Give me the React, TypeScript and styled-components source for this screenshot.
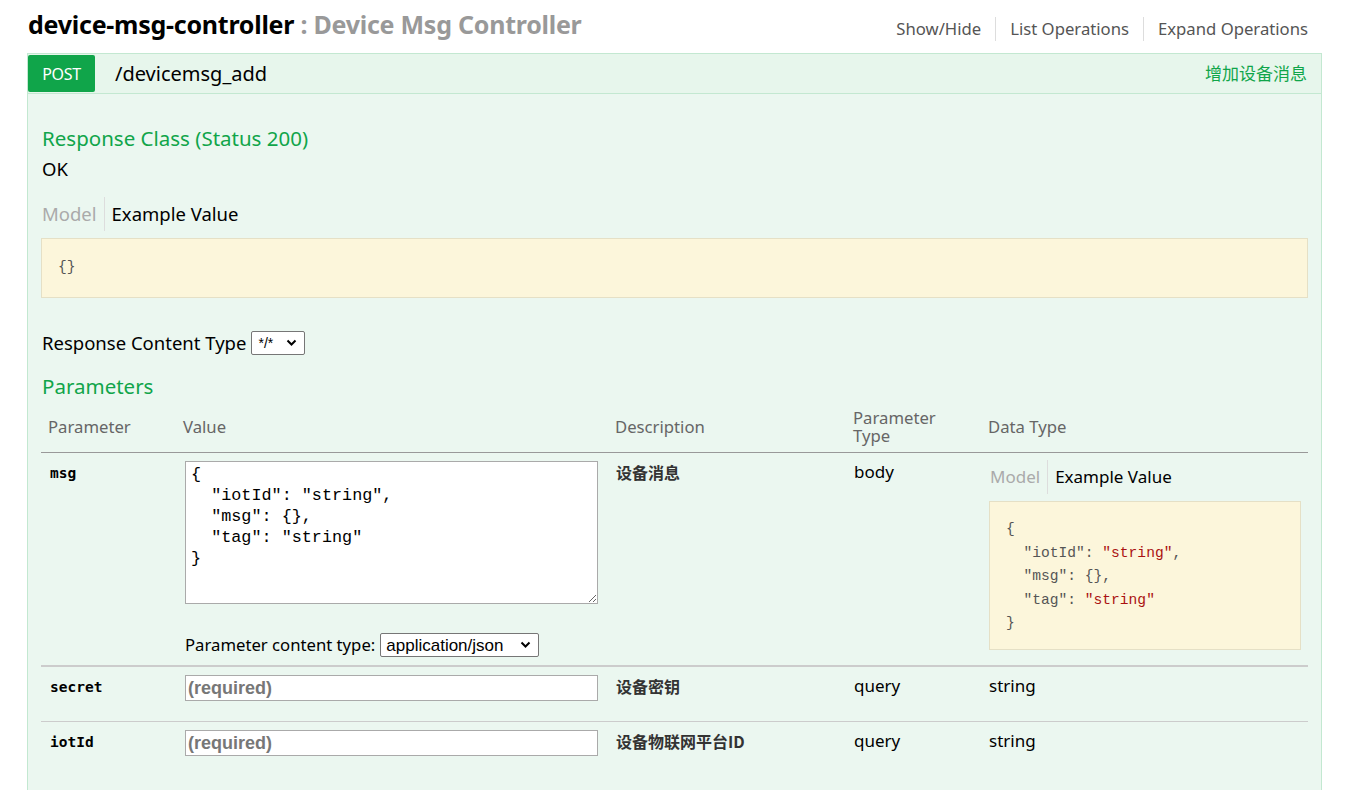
import React from "react";
import styled, { createGlobalStyle } from "styled-components";

const Global = createGlobalStyle`
  html, body { margin: 0; padding: 0; background: #fff; }
  body { font-family: "Noto Sans", "Open Sans", "Noto Sans CJK SC", sans-serif; color: #000; }
  * { box-sizing: border-box; }
`;

const GREEN = "#10a54a";

const Page = styled.div`
  padding: 0 27px;
  width: 1349px;
`;

const Header = styled.div`
  display: flex;
  justify-content: space-between;
  align-items: center;
  height: 53px;
  padding-left: 1px;
`;

const Title = styled.h2`
  margin: 0;
  font-size: 25px;
  font-weight: 700;
  color: #000;
  letter-spacing: -0.25px;
  position: relative;
  top: -3px;
`;

const Sub = styled.span`
  color: #999;
`;

const Links = styled.ul`
  display: flex;
  list-style: none;
  margin: 0;
  padding: 0 14px 0 0;
  position: relative;
  top: 2px;
`;

const LinkItem = styled.li<{ $first?: boolean }>`
  font-size: 16.7px;
  color: #555;
  padding: 0 14px;
  border-left: ${(p) => (p.$first ? "none" : "1px solid #ddd")};
  line-height: 24px;
  &:last-child { padding-right: 0; }
`;

const Operation = styled.div`
  border: 1px solid #c3e8d1;
  border-bottom: none;
`;

const OpHeading = styled.div`
  display: flex;
  align-items: center;
  height: 40px;
  background: #e7f6ec;
  border-bottom: 1px solid #c3e8d1;
  padding: 1px 14px 1px 0;
`;

const Method = styled.span`
  display: flex;
  align-items: center;
  justify-content: center;
  width: 67px;
  height: 37px;
  background: ${GREEN};
  color: #fff;
  font-size: 16px;
  border-radius: 2px;
  letter-spacing: -0.3px;
`;

const Path = styled.span`
  font-size: 20px;
  margin-left: 20px;
  color: #000;
  flex: 1;
`;

const Summary = styled.span`
  color: ${GREEN};
  font-size: 17px;
  position: relative;
  top: -1px;
`;

const Content = styled.div`
  background: #ebf7f0;
  padding: 14px 13px 40px 13px;
`;

const SectionTitle = styled.h4<{ $mt?: number }>`
  margin: ${(p) => p.$mt ?? 0}px 0 0 1px;
  color: ${GREEN};
  font-size: 20.5px;
  font-weight: 400;
  line-height: 30px;
`;

const Plain = styled.div`
  font-size: 18.5px;
  line-height: 32px;
  margin-left: 1px;
`;

const SigTabs = styled.div<{ $mt?: number }>`
  display: flex;
  align-items: center;
  margin-top: ${(p) => p.$mt ?? 0}px;
  height: 34px;
`;

const SigTab = styled.span<{ $active?: boolean; $small?: boolean }>`
  font-size: ${(p) => (p.$small ? 17 : 18.5)}px;
  color: ${(p) => (p.$active ? "#000" : "#aaa")};
  padding: 0 7px 0 ${(p) => (p.$active ? 7 : 1)}px;
  line-height: 34px;
  border-left: ${(p) => (p.$active ? "1px solid #ddd" : "none")};
`;

const Snippet = styled.pre<{ $h?: number }>`
  margin: 7px 0 0 0;
  background: #fcf6db;
  border: 1px solid #e5e0c6;
  font-family: "Liberation Mono", "DejaVu Sans Mono", monospace;
  font-size: 14.6px;
  line-height: 23.6px;
  color: #555;
  padding: ${(p) => (p.$h ? "16px 16px" : "17px 16px")};
  height: ${(p) => (p.$h ? `${p.$h}px` : "auto")};
  white-space: pre;
`;

const Str = styled.span`
  color: #a11;
`;

const ContentType = styled.div`
  display: flex;
  align-items: center;
  margin-top: 33px;
  font-size: 18.5px;
  gap: 5px;
  margin-left: 1px;
  height: 24px;
`;

const SelectWrap = styled.span`
  position: relative;
  display: inline-flex;
`;

const Select = styled.select<{ $w: number }>`
  appearance: none;
  -webkit-appearance: none;
  font-family: "Liberation Sans", Arial, sans-serif;
  font-size: ${(p) => (p.$w < 80 ? 14 : 17)}px;
  width: ${(p) => p.$w}px;
  height: 24px;
  border: 1px solid #767676;
  border-radius: 2px;
  background: #fff;
  color: #000;
  padding: 0 20px 0 ${(p) => (p.$w < 80 ? 6 : 5)}px;
`;

const Chevron = styled.svg`
  position: absolute;
  right: 8px;
  top: 8px;
  width: 11px;
  height: 8px;
  pointer-events: none;
`;

const Table = styled.table`
  width: 100%;
  border-collapse: collapse;
  margin-top: 2px;
`;

const Th = styled.th<{ $w?: number }>`
  text-align: left;
  font-weight: 400;
  font-size: 16.7px;
  color: #666;
  padding: 0 7px;
  line-height: 18.5px;
  vertical-align: middle;
  border-bottom: 1px solid #999;
  width: ${(p) => (p.$w ? `${p.$w}px` : "auto")};
  height: 50px;
`;

const Tr = styled.tr<{ $thick?: boolean }>`
  border-bottom: ${(p) => (p.$thick ? "2px solid #ccc" : "1px solid #ccc")};
  &:last-child { border-bottom: none; }
`;

const Td = styled.td<{ $pl?: number }>`
  vertical-align: top;
  padding: 8px 7px 8px ${(p) => p.$pl ?? 8}px;
  font-size: 17px;
  line-height: 22px;
`;

const ParamName = styled.code`
  font-family: "DejaVu Sans Mono", "Liberation Mono", monospace;
  font-weight: 700;
  font-size: 14.5px;
  line-height: 22px;
`;

const Desc = styled.strong`
  font-family: "Noto Sans CJK SC", sans-serif;
  font-weight: 700;
  font-size: 16px;
  color: #333;
  line-height: 22px;
`;

const CellText = styled.span`
  font-size: 17px;
  line-height: 22px;
`;

const BodyArea = styled.textarea`
  display: block;
  width: 413px;
  height: 143px;
  font-family: "Liberation Mono", "DejaVu Sans Mono", monospace;
  font-size: 16.8px;
  line-height: 21px;
  color: #000;
  border: 1px solid #aaa;
  padding: 2px 5px;
  resize: vertical;
`;

const TextInput = styled.input`
  display: block;
  width: 413px;
  height: 26px;
  margin-bottom: 12px;
  border: 1px solid #aaa;
  font-family: "Liberation Sans", Arial, sans-serif;
  font-size: 18px;
  font-weight: 700;
  padding: 0 2px;
  &::placeholder { color: #777; }
`;

const ContentTypeRow = styled.div`
  display: flex;
  align-items: center;
  gap: 5px;
  margin-top: 29px;
  font-size: 16.7px;
  color: #000;
`;

const ModelCell = styled.div`
  margin-top: -4px;
`;

const bodyJson = `{
  "iotId": "string",
  "msg": {},
  "tag": "string"
}`;

function Dropdown({ w, value }: { w: number; value: string }) {
  return (
    <SelectWrap>
      <Select $w={w} defaultValue={value}>
        <option>{value}</option>
      </Select>
      <Chevron viewBox="0 0 11 8">
        <path d="M1.5 1.5 L5.5 5.5 L9.5 1.5" fill="none" stroke="#000" strokeWidth="2" />
      </Chevron>
    </SelectWrap>
  );
}

export default function App() {
  return (
    <Page>
      <Global />
      <Header>
        <Title>
          device-msg-controller <Sub>: Device Msg Controller</Sub>
        </Title>
        <Links>
          <LinkItem $first>Show/Hide</LinkItem>
          <LinkItem>List Operations</LinkItem>
          <LinkItem>Expand Operations</LinkItem>
        </Links>
      </Header>
      <Operation>
        <OpHeading>
          <Method>POST</Method>
          <Path>/devicemsg_add</Path>
          <Summary>增加设备消息</Summary>
        </OpHeading>
        <Content>
          <SectionTitle $mt={15}>Response Class (Status 200)</SectionTitle>
          <Plain>OK</Plain>
          <SigTabs $mt={12}>
            <SigTab>Model</SigTab>
            <SigTab $active>Example Value</SigTab>
          </SigTabs>
          <Snippet>{"{}"}</Snippet>
          <ContentType>
            Response Content Type
            <Dropdown w={54} value="*/*" />
          </ContentType>
          <SectionTitle $mt={16}>Parameters</SectionTitle>
          <Table>
            <thead>
              <tr>
                <Th $w={135}>Parameter</Th>
                <Th $w={432}>Value</Th>
                <Th $w={238}>Description</Th>
                <Th $w={135}>
                  Parameter
                  <br />
                  Type
                </Th>
                <Th>Data Type</Th>
              </tr>
            </thead>
            <tbody>
              <Tr $thick>
                <Td $pl={9}>
                  <ParamName>msg</ParamName>
                </Td>
                <Td $pl={9}>
                  <BodyArea defaultValue={bodyJson} />
                  <ContentTypeRow>
                    Parameter content type:
                    <Dropdown w={159} value="application/json" />
                  </ContentTypeRow>
                </Td>
                <Td>
                  <Desc>设备消息</Desc>
                </Td>
                <Td>
                  <CellText>body</CellText>
                </Td>
                <Td>
                  <ModelCell>
                    <SigTabs $mt={3}>
                      <SigTab $small>Model</SigTab>
                      <SigTab $small $active>Example Value</SigTab>
                    </SigTabs>
                    <Snippet $h={149}>
                      {"{\n  "}"iotId": <Str>"string"</Str>,{"\n  "}"msg": {"{}"},{"\n  "}"tag": <Str>"string"</Str>{"\n}"}
                    </Snippet>
                  </ModelCell>
                </Td>
              </Tr>
              <Tr>
                <Td $pl={9}>
                  <ParamName>secret</ParamName>
                </Td>
                <Td $pl={9}>
                  <TextInput placeholder="(required)" />
                </Td>
                <Td>
                  <Desc>设备密钥</Desc>
                </Td>
                <Td>
                  <CellText>query</CellText>
                </Td>
                <Td>
                  <CellText>string</CellText>
                </Td>
              </Tr>
              <Tr>
                <Td $pl={9}>
                  <ParamName>iotId</ParamName>
                </Td>
                <Td $pl={9}>
                  <TextInput placeholder="(required)" />
                </Td>
                <Td>
                  <Desc>设备物联网平台ID</Desc>
                </Td>
                <Td>
                  <CellText>query</CellText>
                </Td>
                <Td>
                  <CellText>string</CellText>
                </Td>
              </Tr>
            </tbody>
          </Table>
        </Content>
      </Operation>
    </Page>
  );
}
